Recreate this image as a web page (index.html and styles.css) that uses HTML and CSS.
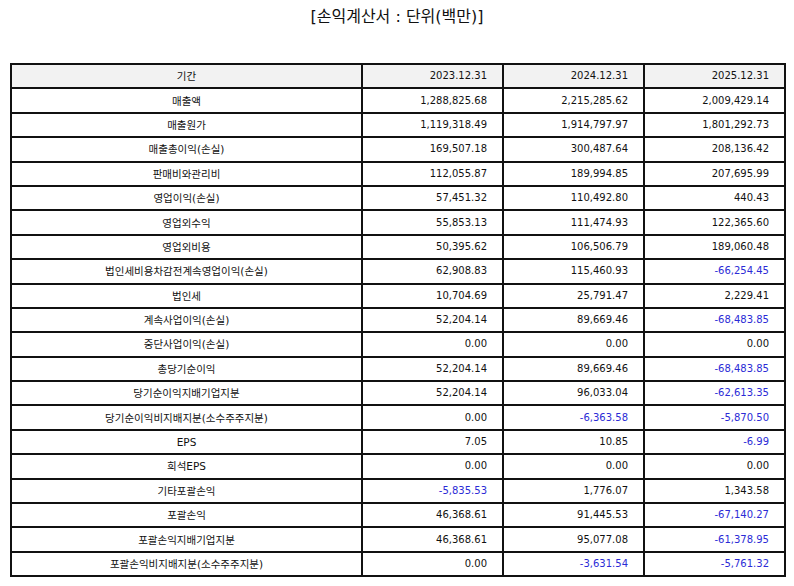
FILE: index.html
```html
<!DOCTYPE html>
<html lang="ko">
<head>
<meta charset="utf-8">
<title>손익계산서</title>
<link rel="stylesheet" href="styles.css">
</head>
<body>
<div class="page">
  <h1 class="title">[손익계산서 : 단위(백만)]</h1>
  <table class="fs">
    <colgroup>
      <col class="c-label"><col class="c-num"><col class="c-num"><col class="c-num">
    </colgroup>
    <thead>
      <tr><th class="lbl">기간</th><th class="num">2023.12.31</th><th class="num">2024.12.31</th><th class="num">2025.12.31</th></tr>
    </thead>
    <tbody>
      <tr><td class="lbl">매출액</td><td class="num">1,288,825.68</td><td class="num">2,215,285.62</td><td class="num">2,009,429.14</td></tr>
      <tr><td class="lbl">매출원가</td><td class="num">1,119,318.49</td><td class="num">1,914,797.97</td><td class="num">1,801,292.73</td></tr>
      <tr><td class="lbl">매출총이익(손실)</td><td class="num">169,507.18</td><td class="num">300,487.64</td><td class="num">208,136.42</td></tr>
      <tr><td class="lbl">판매비와관리비</td><td class="num">112,055.87</td><td class="num">189,994.85</td><td class="num">207,695.99</td></tr>
      <tr><td class="lbl">영업이익(손실)</td><td class="num">57,451.32</td><td class="num">110,492.80</td><td class="num">440.43</td></tr>
      <tr><td class="lbl">영업외수익</td><td class="num">55,853.13</td><td class="num">111,474.93</td><td class="num">122,365.60</td></tr>
      <tr><td class="lbl">영업외비용</td><td class="num">50,395.62</td><td class="num">106,506.79</td><td class="num">189,060.48</td></tr>
      <tr><td class="lbl">법인세비용차감전계속영업이익(손실)</td><td class="num">62,908.83</td><td class="num">115,460.93</td><td class="num neg">-66,254.45</td></tr>
      <tr><td class="lbl">법인세</td><td class="num">10,704.69</td><td class="num">25,791.47</td><td class="num">2,229.41</td></tr>
      <tr><td class="lbl">계속사업이익(손실)</td><td class="num">52,204.14</td><td class="num">89,669.46</td><td class="num neg">-68,483.85</td></tr>
      <tr><td class="lbl">중단사업이익(손실)</td><td class="num">0.00</td><td class="num">0.00</td><td class="num">0.00</td></tr>
      <tr><td class="lbl">총당기순이익</td><td class="num">52,204.14</td><td class="num">89,669.46</td><td class="num neg">-68,483.85</td></tr>
      <tr><td class="lbl">당기순이익지배기업지분</td><td class="num">52,204.14</td><td class="num">96,033.04</td><td class="num neg">-62,613.35</td></tr>
      <tr><td class="lbl">당기순이익비지배지분(소수주주지분)</td><td class="num">0.00</td><td class="num neg">-6,363.58</td><td class="num neg">-5,870.50</td></tr>
      <tr><td class="lbl">EPS</td><td class="num">7.05</td><td class="num">10.85</td><td class="num neg">-6.99</td></tr>
      <tr><td class="lbl">희석EPS</td><td class="num">0.00</td><td class="num">0.00</td><td class="num">0.00</td></tr>
      <tr><td class="lbl">기타포괄손익</td><td class="num neg">-5,835.53</td><td class="num">1,776.07</td><td class="num">1,343.58</td></tr>
      <tr><td class="lbl">포괄손익</td><td class="num">46,368.61</td><td class="num">91,445.53</td><td class="num neg">-67,140.27</td></tr>
      <tr><td class="lbl">포괄손익지배기업지분</td><td class="num">46,368.61</td><td class="num">95,077.08</td><td class="num neg">-61,378.95</td></tr>
      <tr><td class="lbl">포괄손익비지배지분(소수주주지분)</td><td class="num">0.00</td><td class="num neg">-3,631.54</td><td class="num neg">-5,761.32</td></tr>
    </tbody>
  </table>
</div>
</body>
</html>
```

FILE: styles.css
```css
html, body {
  margin: 0;
  padding: 0;
  background: #ffffff;
}

.page {
  width: 794px;
  font-family: "DejaVu Sans", "Noto Sans CJK KR", sans-serif;
  color: #111111;
}

.title {
  margin: 0;
  height: 63px;
  padding-top: 6px;
  box-sizing: border-box;
  text-align: center;
  font-family: "DejaVu Sans", "Noto Sans CJK KR", sans-serif;
  font-weight: normal;
  font-size: 16px;
  line-height: 22px;
  color: #111111;
}

.fs {
  margin-left: 10px;
  width: 776px;
  border-collapse: collapse;
  table-layout: fixed;
  font-size: 10px;
}

.c-label { width: 351px; }
.c-num { width: 141px; }

.fs th,
.fs td {
  border: 2px solid #111111;
  height: 22.4px;
  padding: 0 15px 0 6px;
  text-align: center;
  font-weight: normal;
  white-space: nowrap;
  vertical-align: middle;
  line-height: 12px;
}

.fs .lbl {
  padding: 0 6px;
  font-size: 10.5px;
}

.fs thead th {
  background: #f2f2f2;
}

.fs .num {
  text-align: right;
}

.fs .neg {
  color: #2b2bd6;
}
```
